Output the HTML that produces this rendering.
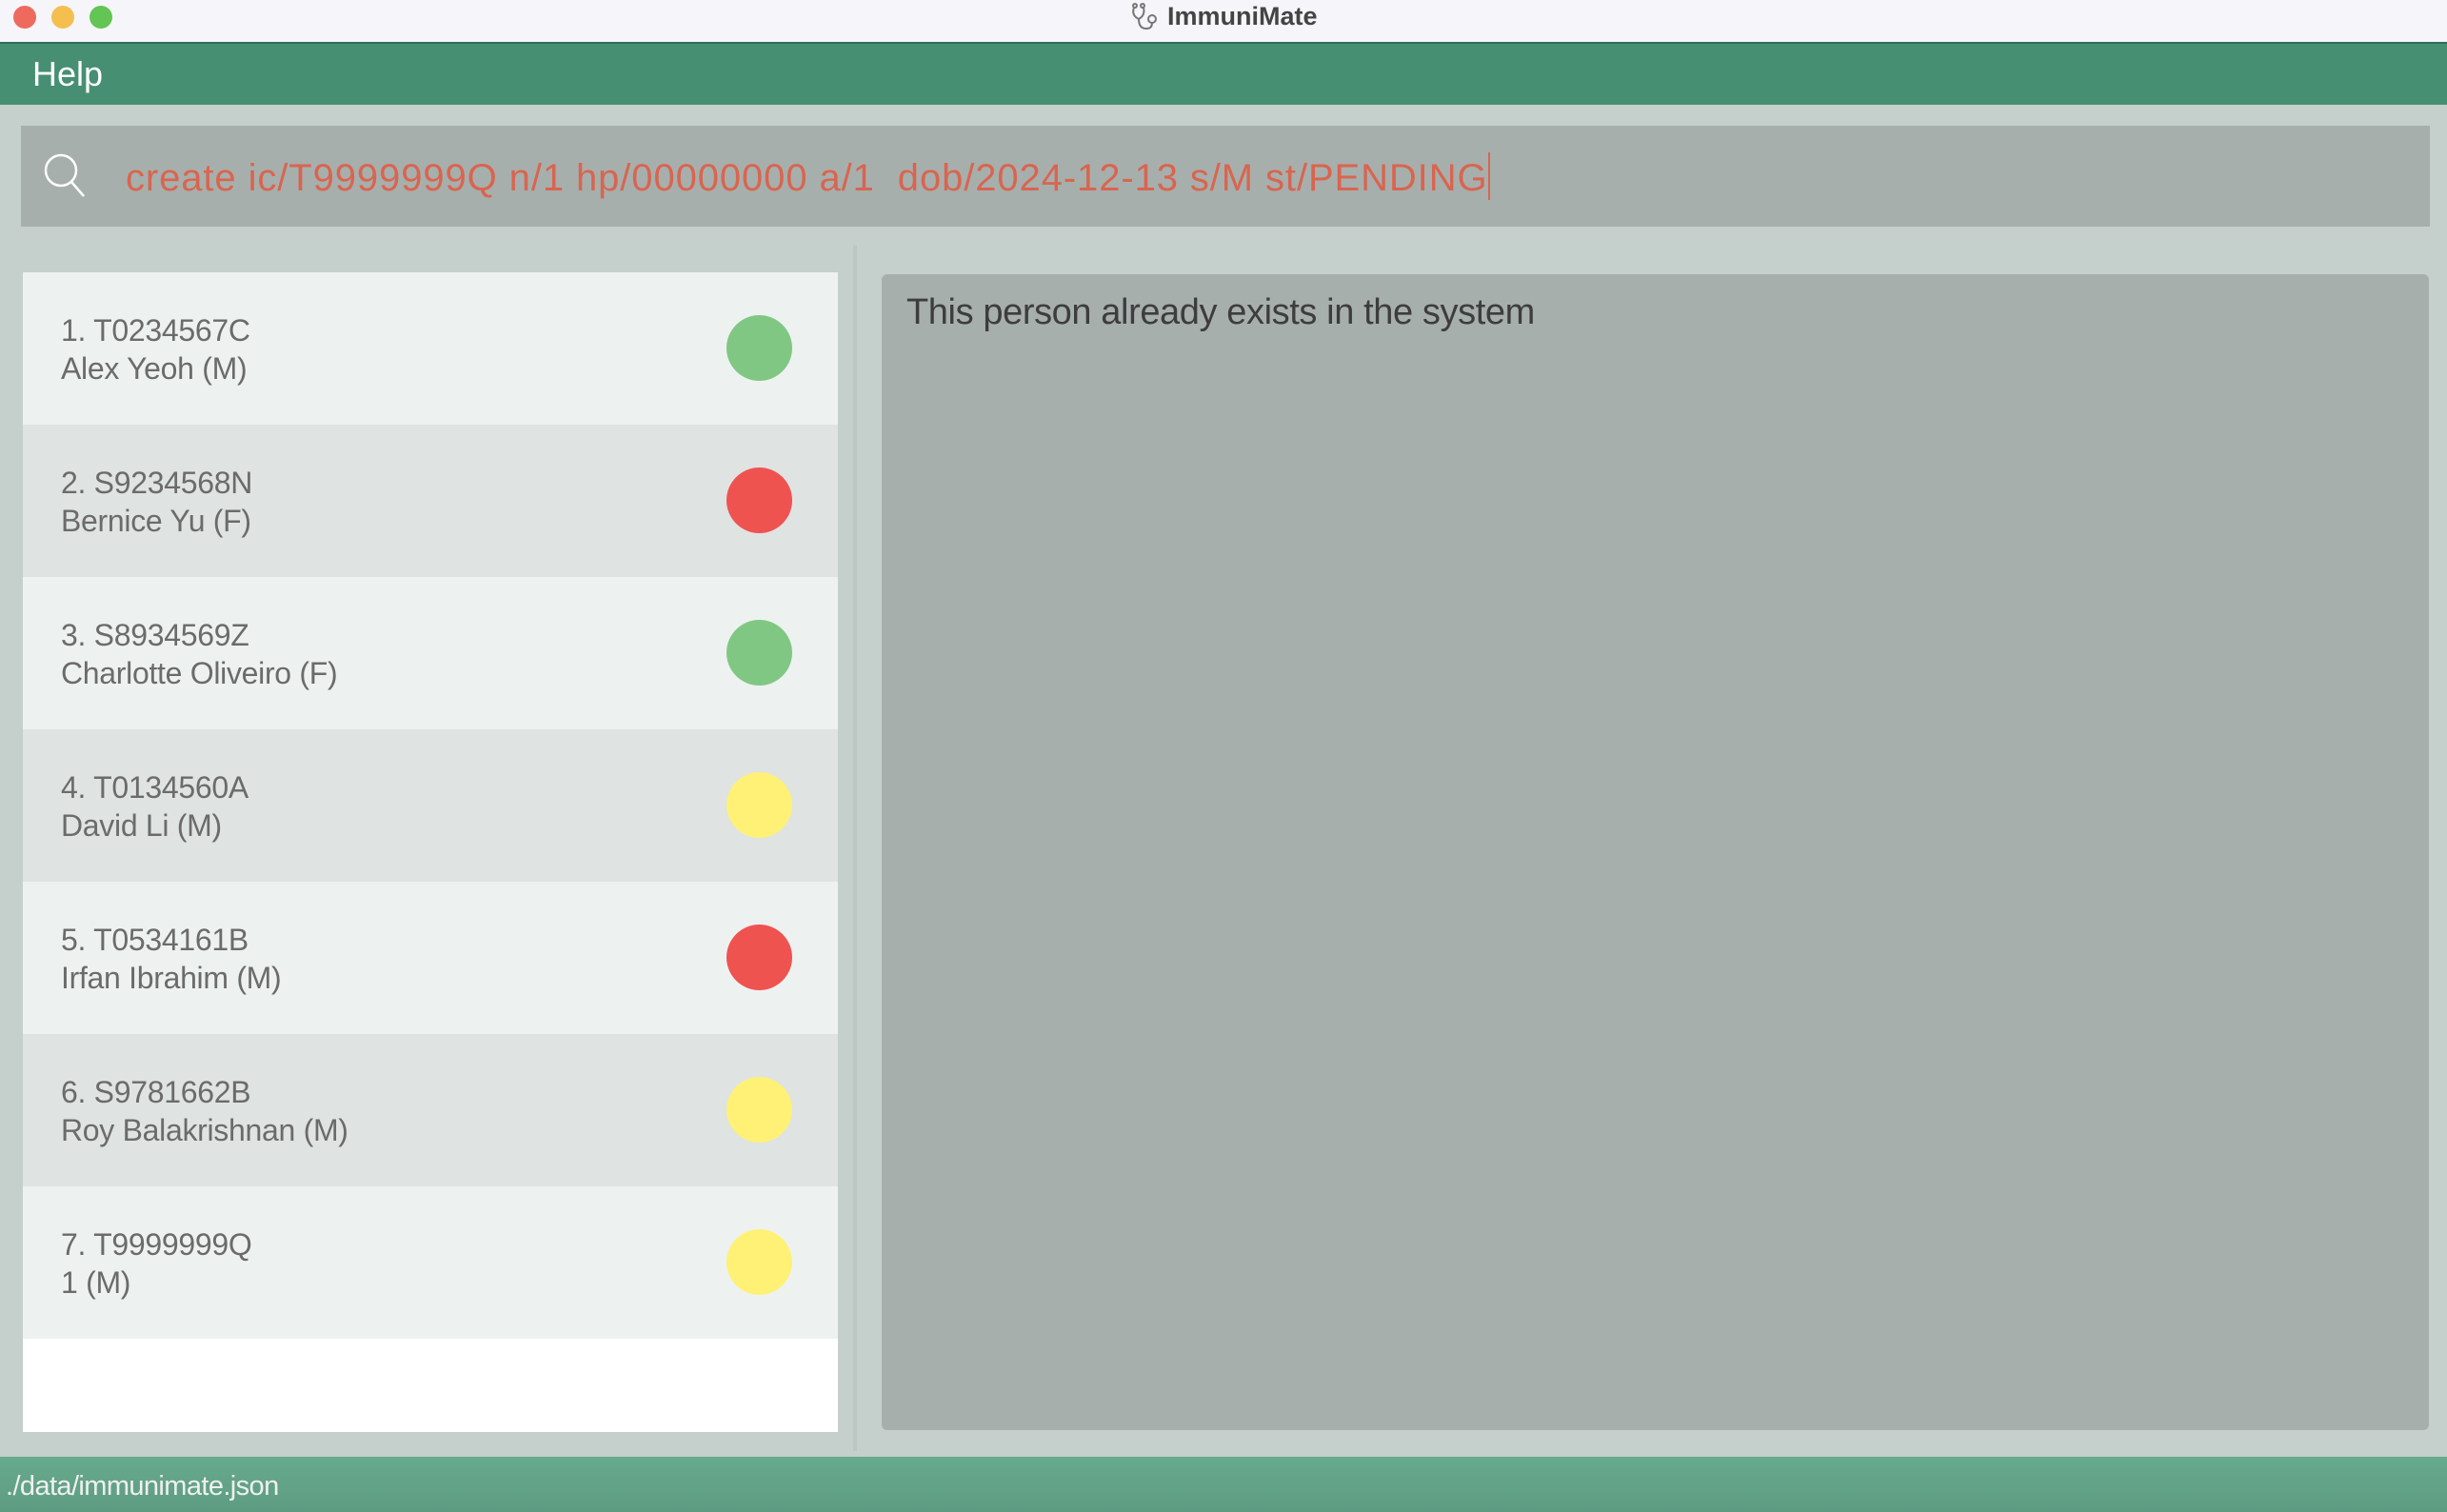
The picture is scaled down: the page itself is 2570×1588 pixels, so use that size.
<!DOCTYPE html>
<html><head><meta charset="utf-8"><style>
*{margin:0;padding:0;box-sizing:border-box}
body{width:2570px;height:1588px;overflow:hidden;background:#c5cfcb;font-family:"Liberation Sans",sans-serif;position:relative}
.abs{position:absolute}
.title{left:0;top:0;width:2570px;height:46px;background:#f6f5fa;border-bottom:2px solid #2f6e55}
.dot{width:24px;height:24px;border-radius:50%;top:6px}
.menu{left:0;top:46px;width:2570px;height:64px;background:#468f72}
.row{left:24px;width:856px;height:160px}
.row .t{position:absolute;left:40px;font-size:32px;color:#6b6b6b;letter-spacing:-0.3px}
.row .c{position:absolute;left:739px;top:45px;width:69px;height:69px;border-radius:50%}
</style></head><body>
<div class="abs title"></div>
<div class="abs dot" style="left:14px;background:#ee6a5e"></div>
<div class="abs dot" style="left:54px;background:#f5bf4f"></div>
<div class="abs dot" style="left:94px;background:#62c554"></div>
<svg class="abs" style="left:1186px;top:2px" width="32" height="32" viewBox="0 0 32 32" fill="none" stroke="#777" stroke-width="2"><circle cx="6" cy="4" r="2"/><circle cx="14" cy="4" r="2"/><path d="M5 6 Q2 14 10 18 Q17 14 15 6 M10 18 Q10 28 18 28 Q24 28 24 22"/><circle cx="24" cy="18" r="4"/></svg>
<div class="abs" style="left:1226px;top:2px;font-size:27px;font-weight:bold;color:#444">ImmuniMate</div>
<div class="abs menu"></div>
<div class="abs" style="left:34px;top:57px;font-size:36px;color:#fff">Help</div>
<div class="abs" style="left:22px;top:132px;width:2530px;height:106px;background:#a7afad"></div>
<svg class="abs" style="left:40px;top:158px" width="56" height="56" viewBox="0 0 56 56" fill="none" stroke="#fff" stroke-width="2.5"><circle cx="24" cy="21" r="16"/><line x1="35" y1="33" x2="48" y2="48"/></svg>
<div class="abs" style="left:132px;top:160px;font-size:40px;color:#d9654f;letter-spacing:0.9px;white-space:pre">create ic/T9999999Q n/1 hp/00000000 a/1  dob/2024-12-13 s/M st/PENDING<span style="display:inline-block;width:2px;height:50px;background:#d9654f;vertical-align:-10px"></span></div>
<div class="abs" style="left:0;top:258px;width:900px;height:1266px;background:#c5cfcb;border-right:4px solid #bcc6c2"></div>
<div class="abs" style="left:24px;top:286px;width:856px;height:1218px;background:#fff"></div>

<div class="abs row" style="top:286px;background:#edf2f0"><div class="t" style="top:43px">1. T0234567C</div><div class="t" style="top:83px">Alex Yeoh (M)</div><div class="c" style="background:#80c784"></div></div>
<div class="abs row" style="top:446px;background:#dfe3e1"><div class="t" style="top:43px">2. S9234568N</div><div class="t" style="top:83px">Bernice Yu (F)</div><div class="c" style="background:#ef5350"></div></div>
<div class="abs row" style="top:606px;background:#edf2f0"><div class="t" style="top:43px">3. S8934569Z</div><div class="t" style="top:83px">Charlotte Oliveiro (F)</div><div class="c" style="background:#80c784"></div></div>
<div class="abs row" style="top:766px;background:#dfe3e1"><div class="t" style="top:43px">4. T0134560A</div><div class="t" style="top:83px">David Li (M)</div><div class="c" style="background:#fff176"></div></div>
<div class="abs row" style="top:926px;background:#edf2f0"><div class="t" style="top:43px">5. T0534161B</div><div class="t" style="top:83px">Irfan Ibrahim (M)</div><div class="c" style="background:#ef5350"></div></div>
<div class="abs row" style="top:1086px;background:#dfe3e1"><div class="t" style="top:43px">6. S9781662B</div><div class="t" style="top:83px">Roy Balakrishnan (M)</div><div class="c" style="background:#fff176"></div></div>
<div class="abs row" style="top:1246px;background:#edf2f0"><div class="t" style="top:43px">7. T9999999Q</div><div class="t" style="top:83px">1 (M)</div><div class="c" style="background:#fff176"></div></div>

<div class="abs" style="left:926px;top:288px;width:1625px;height:1214px;background:#a7afad;border-radius:6px"></div>
<div class="abs" style="left:952px;top:307px;font-size:38px;color:#3d3d3d;letter-spacing:-0.4px">This person already exists in the system</div>
<div class="abs" style="left:0;top:1530px;width:2570px;height:58px;background:linear-gradient(#67aa8d,#5e9c82)"></div>
<div class="abs" style="left:6px;top:1545px;font-size:29px;color:#f0f0f0;letter-spacing:-0.6px">./data/immunimate.json</div>
</body></html>
